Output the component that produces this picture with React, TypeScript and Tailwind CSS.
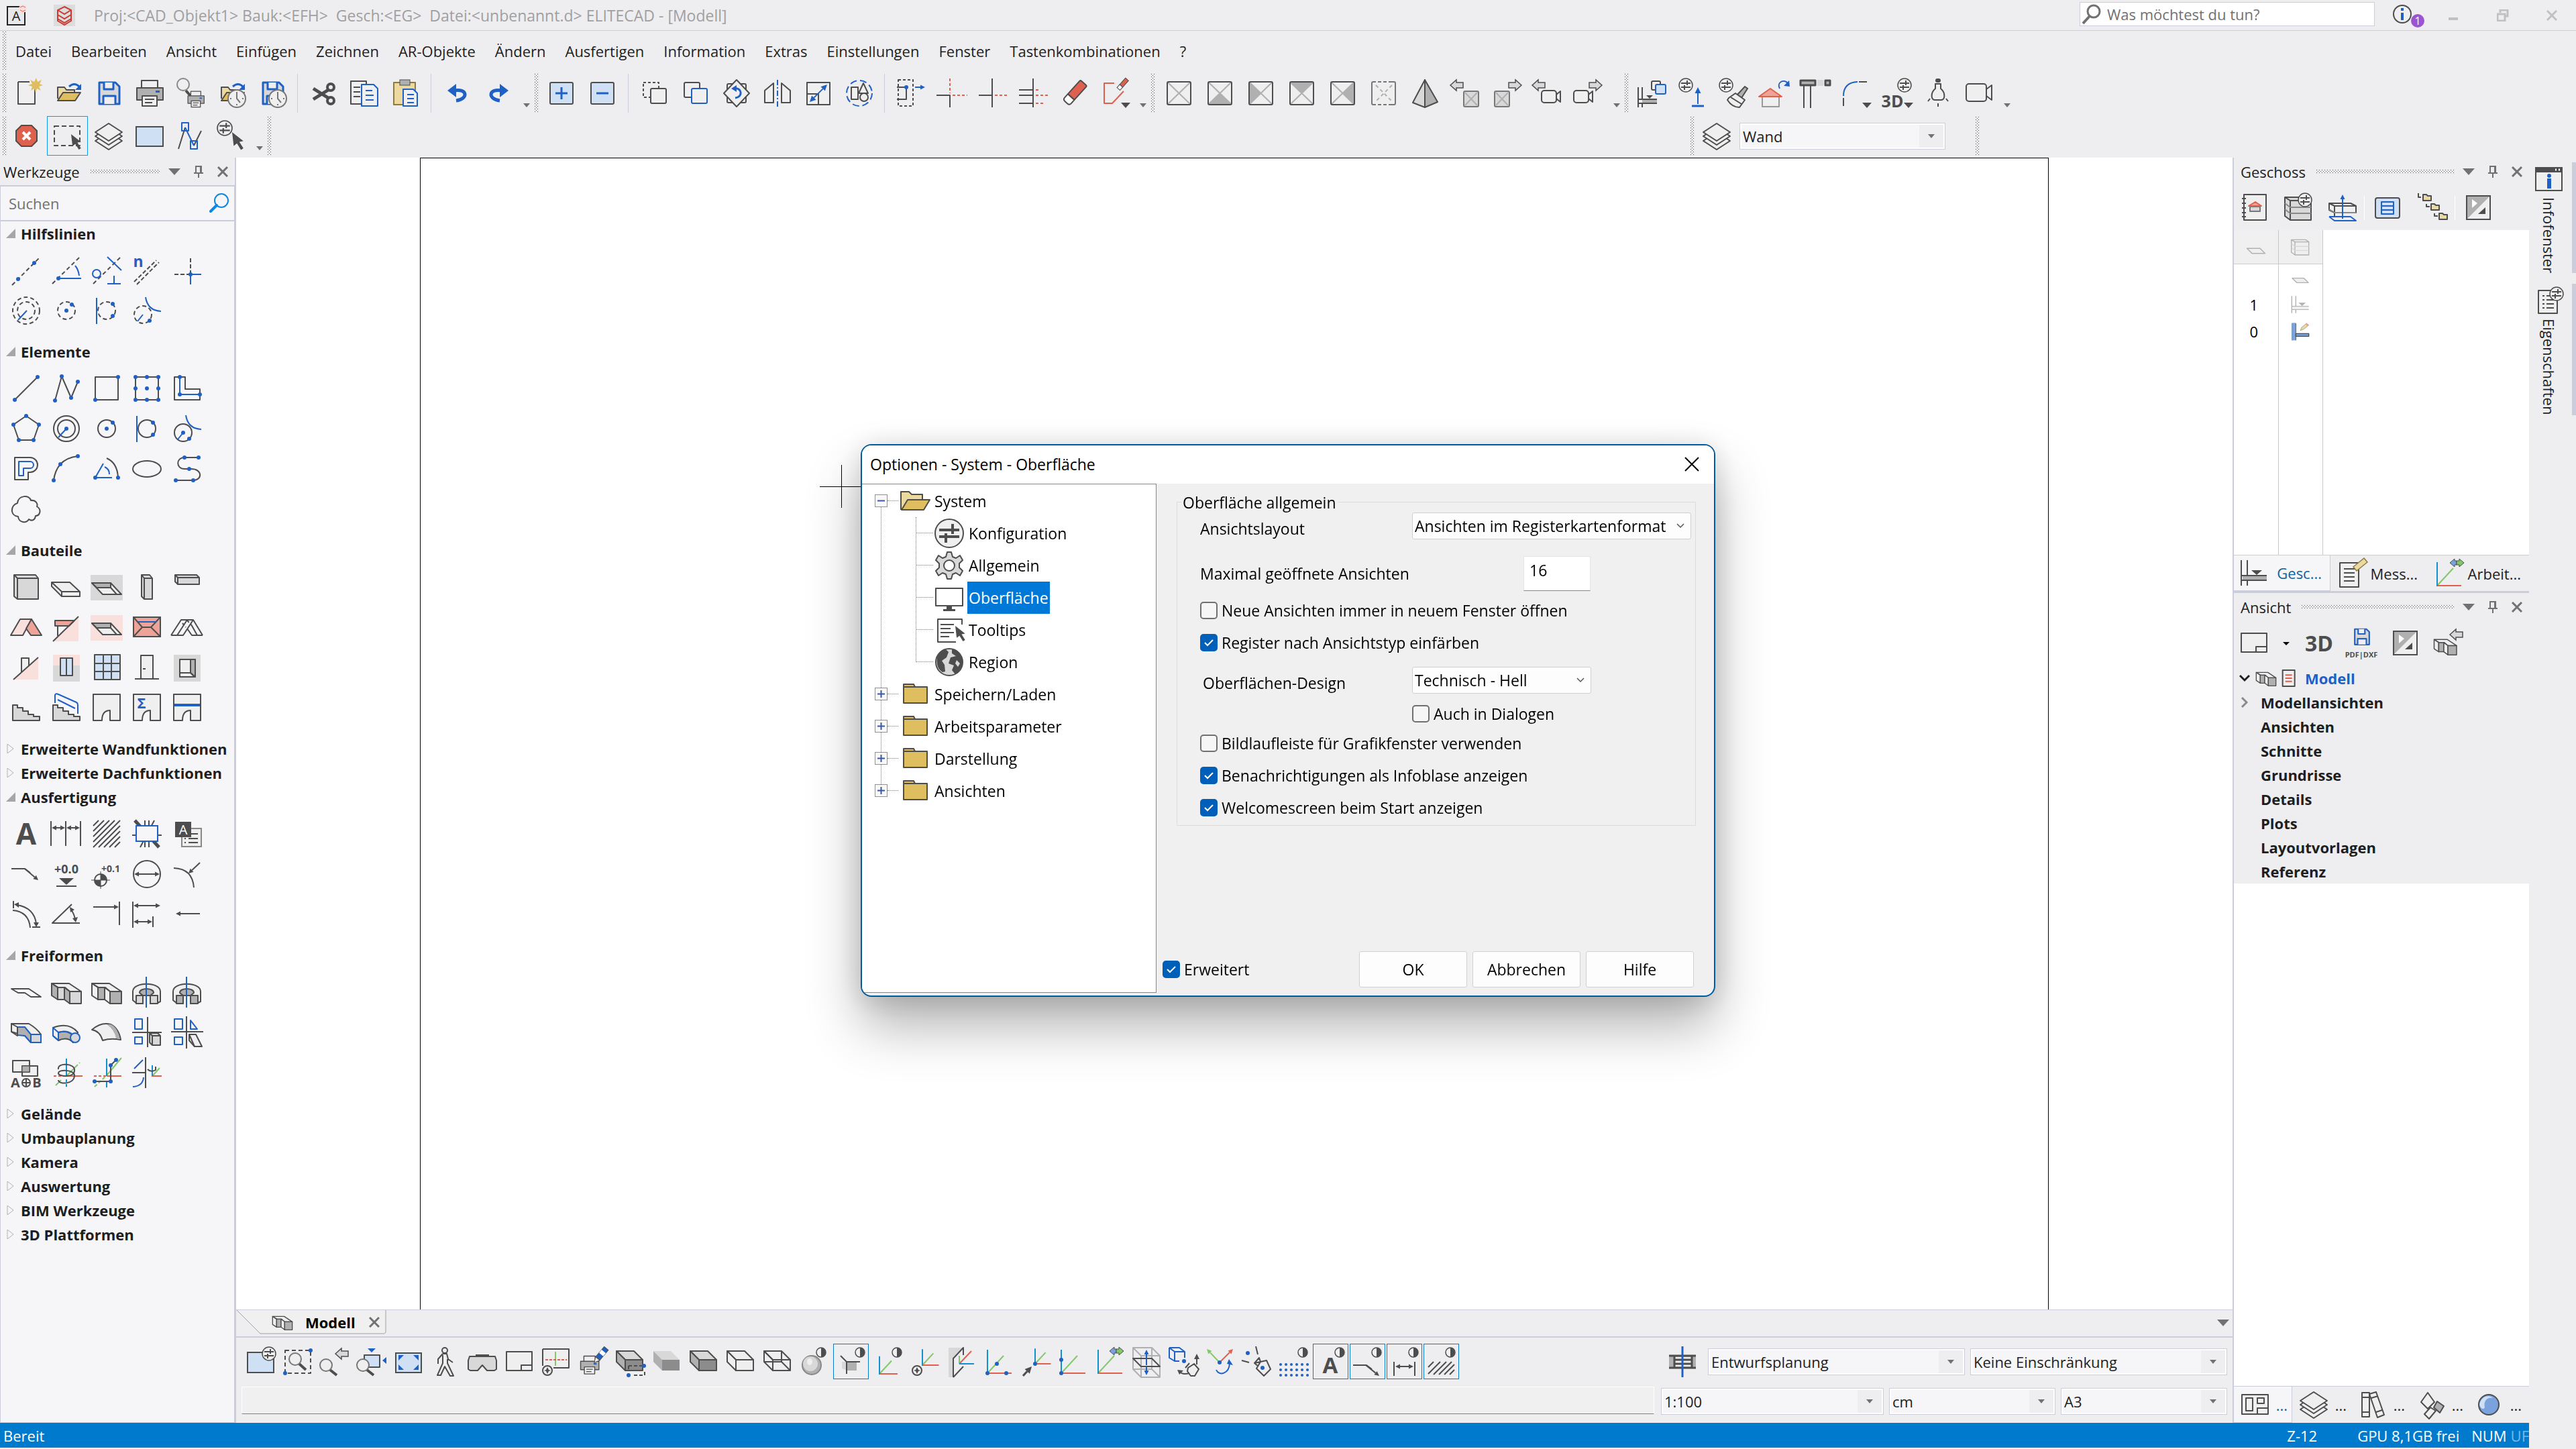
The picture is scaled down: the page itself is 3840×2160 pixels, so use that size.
import React from "react";

const K = "#4d4d4d";
const B = "#1f60c4";
const LB = "#d0e0f4";
const G1 = "#efefef";
const G2 = "#d8d8d8";
const G3 = "#b0b0b0";
const R = "#e0604f";
const R2 = "#eda398";
const PK = "#fae0dc";
const Y = "#dfbe5f";
const YL = "#ecd9a0";
const GR = "#80c868";
const CY = "#1090cc";

/* ---------- drawing primitives ---------- */

function P({ d, c = K, f = "none", w = 2, h }: { d: string; c?: string; f?: string; w?: number; h?: string }) {
  return <path d={d} stroke={c} fill={f} strokeWidth={w} strokeDasharray={h} strokeLinejoin="round" />;
}
function C({ x, y, r, c = K, f = "none", w = 2, h }: { x: number; y: number; r: number; c?: string; f?: string; w?: number; h?: string }) {
  return <circle cx={x} cy={y} r={r} stroke={c} fill={f} strokeWidth={w} strokeDasharray={h} />;
}
function Dots({ p, r = 3 }: { p: number[][]; r?: number }) {
  return (
    <>
      {p.map(([x, y], i) => (
        <circle key={i} cx={x} cy={y} r={r} fill={B} />
      ))}
    </>
  );
}
function Arrow({ a, c = K, both = false, w = 2, s = 7 }: { a: number[]; c?: string; both?: boolean; w?: number; s?: number }) {
  const [x1, y1, x2, y2] = a;
  const n = Math.hypot(x2 - x1, y2 - y1);
  const ux = (x2 - x1) / n;
  const uy = (y2 - y1) / n;
  const head = (x: number, y: number, k: number) =>
    `M${x} ${y}L${x - k * ux * s - uy * s * 0.5} ${y - k * uy * s + ux * s * 0.5}L${x - k * ux * s + uy * s * 0.5} ${y - k * uy * s - ux * s * 0.5}Z`;
  return (
    <>
      <path d={`M${x1 + (both ? ux * s : 0)} ${y1 + (both ? uy * s : 0)}L${x2 - ux * s} ${y2 - uy * s}`} stroke={c} strokeWidth={w} />
      <path d={head(x2, y2, 1)} fill={c} />
      {both && <path d={head(x1, y1, -1)} fill={c} />}
    </>
  );
}
function T({ x, y, s, c = K, w = 700, children }: { x: number; y: number; s: number; c?: string; w?: number; children: React.ReactNode }) {
  return (
    <text x={x} y={y} fontSize={s} fill={c} fontWeight={w} textAnchor="middle" fontFamily='"Open Sans", sans-serif'>
      {children}
    </text>
  );
}
function Badge({ x, y, r = 10 }: { x: number; y: number; r?: number }) {
  return (
    <g transform={`translate(${x} ${y}) scale(${r / 10})`}>
      <circle r="10" fill={G1} stroke={K} strokeWidth="1.5" />
      <path d="M-7 -3H7M-7 3H7M2 -7V0M-2 0V7" stroke={K} strokeWidth="2" />
    </g>
  );
}
function Half({ x = 37, y = 10 }: { x?: number; y?: number }) {
  return (
    <>
      <circle cx={x} cy={y} r="7" fill={G1} stroke={K} strokeWidth="1.5" />
      <path d={`M${x} ${y - 7}a7 7 0 0 1 0 14z`} fill={K} />
    </>
  );
}
function Mag({ x, y, hx, hy, r = 9 }: { x: number; y: number; hx: number; hy: number; r?: number }) {
  return (
    <>
      <path d={`M${x + 6} ${y + 7}L${hx} ${hy}`} stroke={K} strokeWidth="4" />
      <circle cx={x} cy={y} r={r} fill={G1} stroke="#777" strokeWidth="2" />
    </>
  );
}
const Clock = () => (
  <>
    <circle cx="32" cy="32" r="13" fill={G1} stroke="#777" strokeWidth="2" />
    <path d="M32 22V32L37 38M32 42v-2M22 32h2M42 32h-2" stroke="#777" strokeWidth="2" fill="none" />
  </>
);
const Folder = () => (
  <>
    <P d="M9 32V15H19L22 19H34V24" f={YL} />
    <P d="M9 35L17 23H43L35 35Z" f={Y} />
    <P d="M26 14Q34 7 41 14" c={B} w={3} />
    <path d="M44 10V19H35Z" fill={B} />
  </>
);
const Floppy = () => (
  <>
    <P d="M10 8H34L40 14V40H10Z" c={B} f={G2} w={3} />
    <P d="M17 8V18H31V8M16 40V28H34V40" c={B} f={G1} w={3} />
  </>
);
const Printer = () => (
  <>
    <P d="M12 16V5H36V16" f={G1} />
    <P d="M5 16H44V34H5Z" f={G3} />
    <P d="M13 28H35V43H13Z" f={G1} />
    <P d="M17 33H31M17 38H28" />
    <rect x="33" y="20" width="6" height="3" fill={B} />
  </>
);
const ArrowL = ({ x, y }: { x: number; y: number }) => (
  <g transform={`translate(${x} ${y})`}>
    <path d="M0 8L9 0V4H19V12H9V16Z" fill={G2} stroke={K} strokeWidth="1.5" />
  </g>
);
const ArrowR = ({ x, y }: { x: number; y: number }) => (
  <g transform={`translate(${x} ${y})`}>
    <path d="M19 8L10 0V4H0V12H10V16Z" fill={G2} stroke={K} strokeWidth="1.5" />
  </g>
);
const Tri = ({ x = 40, y = 38 }: { x?: number; y?: number }) => <path d={`M${x - 7} ${y}h14l-7 8z`} fill={K} />;
const XBox = ({ f }: { f?: string }) => (
  <>
    <rect x="6" y="7" width="35" height="34" rx="2" fill={G1} />
    {f && <path d={f} fill={G3} />}
    <P d="M7 8L40 40M40 8L7 40" c={G3} />
    <rect x="6" y="7" width="35" height="34" rx="2" fill="none" stroke={K} strokeWidth="2" />
  </>
);
const SmallX = ({ x }: { x: number }) => (
  <>
    <rect x={x} y="21" width="22" height="23" rx="2" fill={G2} stroke="#777" strokeWidth="2" />
    <P d={`M${x + 2} 23l18 19m0 -19l-18 19`} c={G3} />
  </>
);
const Cam = ({ x }: { x: number }) => (
  <>
    <rect x={x} y="20" width="22" height="18" rx="4" fill={G1} stroke={K} strokeWidth="2" />
    <P d={`M${x + 22} 26l6-5v16l-6-5`} />
  </>
);
const Layers = () => (
  <>
    <P d="M4 31L24 44L44 31L38 27H10Z" f={G1} />
    <P d="M4 24L24 37L44 24L38 20H10Z" f={G1} />
    <P d="M24 5L44 18L24 31L4 18Z" f={G1} />
  </>
);
const Cursor = ({ x, y, s = 1 }: { x: number; y: number; s?: number }) => (
  <path transform={`translate(${x} ${y}) scale(${s})`} d="M0 0L14 11L9 12L14 20L11 22L6 14L2 17Z" fill={K} />
);
const Slot = ({ bg }: { bg: string }) => (
  <>
    <rect y="6" width="48" height="38" fill={bg} />
    <P d="M2 18H30L46 35H18Z" f={G1} />
    <P d="M2 18H30V25H9Z" f={G3} />
    <P d="M30 25L39 35" />
  </>
);
const Stairs = () => <P d="M4 20H11V24H19V29H27V34H35V37H44V43H4Z" f={G2} />;
const Wall = () => <P d="M4 4H44V43H29V28Q17 28 17 43H4Z" f={G1} />;
const Block = ({ a, b, c, d }: { a: string; b: string; c: string; d: string }) => (
  <>
    <P d="M2 11H28L46 23H29L22 17H12Z" f={G1} />
    <P d="M2 11V29L11 35V17Z" f={a} />
    <P d="M11 17V35H21V17Z" f={b} />
    <P d="M21 17V35L29 41V23Z" f={c} />
    <P d="M29 23H46V41H29Z" f={d} />
  </>
);
const Ring = ({ f }: { f: string }) => (
  <>
    <P d="M3 23C3 8 44 8 44 23V38L38 41H29V29C36 20 12 20 18 29V41H9L3 36Z" f={G1} />
    <P d="M13 25C13 17 34 17 34 25L29 29H18Z" f={G3} />
    <P d="M8 29H18V41H8ZM29 29H40V41H29Z" f={f} />
    <P d="M23 1V47" c={B} />
  </>
);
const Cube = ({ top, side, front, e = K }: { top: string; side: string; front: string; e?: string }) => (
  <>
    <P d="M4 8H30L43 21H17Z" c={e} f={top} />
    <P d="M4 8V24L17 37V21Z" c={e} f={side} />
    <P d="M17 21H43V37H17Z" c={e} f={front} />
  </>
);
const Axes = ({ x, y, k = 1 }: { x: number; y: number; k?: number }) => (
  <>
    <P d={`M${x} ${y}L${x + 24 * k} ${y - 26 * k}`} c={GR} />
    <P d={`M${x} ${y}H${x + 36 * k}`} c={R} />
    <P d={`M${x} ${y + 1}V${y - 35 * k}`} c={CY} />
  </>
);
const Swap = () => (
  <>
    <path d="M24 8L31 2V5H34V11H31V14Z" fill="#7aa3de" stroke={K} />
    <path d="M45 8L38 2V5H34V11H38V14Z" fill={GR} stroke={K} />
  </>
);
const Scheme = () => (
  <>
    <rect x="6" y="6" width="35" height="35" fill={G1} />
    <path d="M6 6H41L6 41Z" fill={G3} />
    <path d="M14 11L22 17L14 24Z" fill="#fff" />
    <path d="M34 23V33H23Z" fill={K} />
    <rect x="6" y="6" width="35" height="35" fill="none" stroke={K} strokeWidth="2" />
  </>
);
const Sheet = () => <P d="M5 9H43V37H5ZM27 37V29H43" f={G1} />;
const Slab = ({ g = false }: { g?: boolean }) => (
  <>
    <P d="M5 5V43M14 5V27M14 35V43" c={g ? G3 : K} f={G1} />
    <P d="M6 28H43M6 35H43" c={g ? G3 : K} />
    <rect x="7" y="29" width="36" height="5" fill={g ? G1 : G3} />
    <path d="M20 20H36L28 27Z" fill={g ? G3 : K} />
  </>
);
const Storeys = ({ c = K, m = "#888", f = G2 }: { c?: string; m?: string; f?: string }) => (
  <>
    <P d="M4 8H36L43 13V42H12L4 36Z" c={c} f={f} />
    <P d="M4 8L12 13H43M12 13V42" c={c} />
    <P d="M4 17L12 23H43M4 26L12 32H43" c={m} />
  </>
);

const icons: Record<string, React.ReactNode> = {
  /* file toolbar */
  new: (
    <>
      <P d="M11 7H28M11 7V40H36V15" f={G1} />
      <path d="M38 1l2 6 6-3-3 6 5 2-6 2 3 6-6-3-2 6-2-6-5 3 2-6-6-2 6-2-3-6 6 3z" fill={Y} />
    </>
  ),
  open: <Folder />,
  save: <Floppy />,
  print: <Printer />,
  preview: (
    <>
      <P d="M17 20L26 30" w={4} />
      <C x={13} y={11} r={9} c="#888" f={G1} />
      <g transform="translate(17 18) scale(0.62)">
        <Printer />
      </g>
    </>
  ),
  recent: (
    <>
      <Folder />
      <Clock />
    </>
  ),
  autosave: (
    <>
      <Floppy />
      <Clock />
    </>
  ),
  cut: (
    <>
      <P d="M9 17L33 32M9 33L33 18" w={5} />
      <C x={35} y={15} r={5} w={4} />
      <C x={35} y={35} r={5} w={4} />
    </>
  ),
  copy: (
    <>
      <P d="M4 6H27V40H4Z" f={G1} />
      <P d="M8 15H18M8 22H18M8 29H18" w={2} />
      <P d="M20 11H38L44 17V43H20Z" c={B} f={G1} />
      <P d="M26 20H36M26 27H38M26 34H38" c={B} />
    </>
  ),
  paste: (
    <>
      <P d="M7 8H39V41H7Z" c="#8a7a4a" f={YL} />
      <rect x="16" y="4" width="15" height="8" fill={G3} stroke={K} />
      <P d="M21 18H36L42 24V43H21Z" c={B} f={G1} />
      <P d="M27 26H37M27 32H37M27 38H37" c={B} />
    </>
  ),
  undo: (
    <>
      <path d="M9 20L22 10V30Z" fill={B} />
      <P d="M18 20C40 16 40 33 22 35" c={B} w={5} />
    </>
  ),
  redo: (
    <>
      <path d="M39 20L26 10V30Z" fill={B} />
      <P d="M30 20C8 16 8 33 26 35" c={B} w={5} />
    </>
  ),
  plus: (
    <>
      <rect x="7" y="8" width="34" height="32" rx="2" fill={LB} stroke={K} strokeWidth="2" />
      <P d="M24 15V33M15 24H33" c={B} w={3} />
    </>
  ),
  minus: (
    <>
      <rect x="7" y="8" width="34" height="32" rx="2" fill={LB} stroke={K} strokeWidth="2" />
      <P d="M15 24H33" c={B} w={3} />
    </>
  ),
  move: (
    <>
      <P d="M7 8H30V30H7Z" h="4 3" />
      <rect x="18" y="17" width="23" height="22" rx="2" fill={G1} stroke={K} strokeWidth="2" />
    </>
  ),
  dup: (
    <>
      <rect x="7" y="8" width="23" height="22" rx="2" fill={G1} stroke={K} strokeWidth="2" />
      <rect x="18" y="17" width="23" height="22" rx="2" fill={G1} stroke={B} strokeWidth="2" />
    </>
  ),
  rotate: (
    <>
      <rect x="10" y="10" width="28" height="28" rx="2" fill={G1} stroke={K} strokeWidth="2" />
      <P d="M24 4L43 24L24 44L5 24Z" f={G1} />
      <P d="M21 17C32 15 34 30 22 31" c={B} w={3} />
      <path d="M16 17L24 12V22Z" fill={B} />
    </>
  ),
  mirror: (
    <>
      <P d="M5 20L18 9V38H5ZM43 20L30 9V38H43Z" f={G1} />
      <P d="M24 4V44" c={B} h="8 3 2 3" />
    </>
  ),
  scale: (
    <>
      <P d="M7 8H41V41H7ZM7 25H24V41" f={G1} />
      <Arrow a={[11, 37, 37, 11]} c={B} both s={9} />
    </>
  ),
  modify: (
    <>
      <C x={24} y={24} r={19} c={B} h="10 5" />
      <P d="M12 15H22V33H12Z" f={G1} />
      <P d="M30 9L37 24H23Z" f={G1} />
      <C x={31} y={30} r={6} f={G1} />
    </>
  ),
  stretch: (
    <>
      <P d="M6 4H28V43H6Z" h="4 3" />
      <P d="M4 15H18V33H4" />
      <Dots p={[[18, 15]]} />
      <Arrow a={[31, 15, 46, 15]} c={B} />
    </>
  ),
  trim: (
    <>
      <P d="M2 27H22V45" />
      <P d="M22 2V24M26 27H48" c={R} h="4 3" />
    </>
  ),
  extend: (
    <>
      <P d="M24 2V45M4 27H24" />
      <P d="M28 27H48" c={R} h="4 3" />
    </>
  ),
  multi: (
    <>
      <P d="M24 2V45M3 19H24M3 27H24M3 39H24" />
      <P d="M28 19H34M28 27H48M28 39H40" c={R} h="4 3" />
    </>
  ),
  eraser: (
    <g transform="rotate(42 24 24)">
      <rect x="18" y="3" width="13" height="28" rx="2" fill={R} stroke={K} strokeWidth="2" />
      <path d="M18 31H31V38Q31 42 27 42H22Q18 42 18 38Z" fill="#fff" stroke={K} strokeWidth="2" />
    </g>
  ),
  redline: (
    <>
      <P d="M23 9H8V39H20L37 21" c={R} />
      <g transform="rotate(42 36 10)">
        <rect x="33" y="1" width="6" height="13" fill={R} stroke={K} />
        <rect x="33" y="14" width="6" height="6" fill="#fff" stroke={K} />
      </g>
      <Tri />
    </>
  ),
  box0: <XBox />,
  box1: <XBox f="M7 40L24 24L40 40Z" />,
  box2: <XBox f="M7 8L24 24L7 40Z" />,
  box3: <XBox f="M7 8L24 24L40 8Z" />,
  box4: <XBox f="M40 8L24 24L40 40Z" />,
  box5: (
    <>
      <rect x="6" y="7" width="35" height="34" rx="2" fill={G1} stroke="#777" strokeWidth="2" />
      <path d="M12 7h3M20 7h3M28 7h3M12 41h3M20 41h3M28 41h3" stroke={G1} strokeWidth="2" />
      <P d="M12 12L36 36M36 12L12 36" c={G3} h="5 4" />
    </>
  ),
  pyramid: (
    <>
      <P d="M24 4L6 38L24 45Z" f={G2} />
      <P d="M24 4L43 37L24 45Z" f={G3} />
    </>
  ),
  prevbox: (
    <>
      <ArrowL x={1} y={4} />
      <SmallX x={21} />
    </>
  ),
  nextbox: (
    <>
      <ArrowR x={27} y={4} />
      <SmallX x={6} />
    </>
  ),
  prevcam: (
    <>
      <ArrowL x={1} y={4} />
      <Cam x={15} />
    </>
  ),
  nextcam: (
    <>
      <ArrowR x={25} y={4} />
      <Cam x={2} />
    </>
  ),
  level: (
    <>
      <P d="M4 15V45M10 15V33M10 39V45M4 33H32M4 39H32" />
      <rect x="10" y="34" width="22" height="4" fill={G3} />
      <path d="M16 27H26L21 32Z" fill={K} />
      <rect x="24" y="6" width="13" height="13" rx="2" fill={G1} stroke={K} strokeWidth="2" />
      <rect x="30" y="11" width="15" height="14" rx="2" fill={LB} stroke={B} strokeWidth="2" />
    </>
  ),
  height: (
    <>
      <Badge x={14} y={12} />
      <Arrow a={[32, 40, 32, 15]} c={B} s={9} />
      <P d="M23 43H41" c={B} w={3} />
    </>
  ),
  brush: (
    <>
      <path d="M29 27L41 14L45 17L36 31Z" fill={G3} stroke={K} strokeWidth="2" />
      <P d="M17 31L27 24L41 34L33 45Q22 45 15 34Z" f={G1} />
      <P d="M20 30L36 40" />
      <Badge x={13} y={12} />
    </>
  ),
  house: (
    <>
      <P d="M6 29H31V44H6Z" f={G1} c="#999" />
      <P d="M1 29L18 17L35 29Z" f={R2} c={R} />
      <P d="M32 17C27 8 38 2 44 9" c={B} />
      <path d="M47 14L38 13L46 5Z" fill={B} />
    </>
  ),
  column: (
    <>
      <P d="M7 12V46M17 12V46" />
      <P d="M2 5H24V12H2ZM39 5H46V12H39Z" f={G3} w={3} />
      <rect x="27" y="4" width="9" height="9" fill={G2} />
    </>
  ),
  fillet: (
    <>
      <P d="M5 28Q5 8 26 7" c={B} />
      <P d="M28 7H40M5 31V43" />
      <Tri />
    </>
  ),
  three: (
    <>
      <T x={17} y={45} s={25}>3D</T>
      <Badge x={35} y={12} />
      <Tri x={41} />
    </>
  ),
  lamp: (
    <>
      <rect x="20" y="2" width="8" height="6" rx="3" fill={K} />
      <P d="M20 10H28V17C36 24 34 34 29 34H19C14 34 12 24 20 17Z" f={G1} />
      <P d="M12 32L9 36M36 32L39 36M24 39V44" />
    </>
  ),
  camera: (
    <>
      <rect x="5" y="10" width="30" height="26" rx="4" fill={G1} stroke={K} strokeWidth="2" />
      <P d="M35 18L43 12V34L35 28" />
    </>
  ),
  cancel: (
    <>
      <path d="M16 8H31L39 16V31L31 39H16L8 31V16Z" fill={R} stroke={K} strokeWidth="2" />
      <P d="M18 18L29 29M29 18L18 29" c="#fff" w={4} />
    </>
  ),
  select: (
    <>
      <P d="M4 9H42V38H4Z" h="7 4" />
      <Cursor x={29} y={21} s={1.05} />
    </>
  ),
  layers: <Layers />,
  rect: <rect x="4" y="10" width="40" height="29" fill={LB} stroke={K} strokeWidth="2" />,
  nodes: (
    <>
      <P d="M6 43L16 11M29 38L40 16" />
      <P d="M16 11L29 38" c={B} />
      <P d="M11 4H21V16H11ZM24 31H34V43H24Z" c={B} />
    </>
  ),
  pick: (
    <>
      <Badge x={14} y={12} r={11} />
      <Cursor x={25} y={18} s={1.2} />
    </>
  ),
  /* construction lines */
  h1: (
    <>
      <P d="M3 46L45 4" h="6 4" />
      <Dots p={[[12, 37], [36, 13]]} />
    </>
  ),
  h2: (
    <>
      <P d="M3 44L43 5" h="6 4" />
      <P d="M12 36H46M37 17Q42 23 43 32" c={B} />
      <Dots p={[[12, 36]]} />
    </>
  ),
  h3: (
    <>
      <P d="M4 44L44 5" h="6 4" />
      <C x={9} y={29} r={6} c={B} />
      <P d="M25 4L46 24M25 44H45M35 32V44" c={B} />
    </>
  ),
  h4: (
    <>
      <P d="M5 41L38 9M9 45L42 12" h="6 3" />
      <T x={11} y={19} s={23} c={B}>n</T>
    </>
  ),
  h5: (
    <>
      <P d="M29 30V4M29 30H3" h="6 3" />
      <P d="M29 45V30H45" c={B} />
      <Dots p={[[29, 30]]} />
    </>
  ),
  h6: (
    <>
      <C x={24} y={24} r={20} h="6 4" />
      <C x={24} y={24} r={13} h="6 4" />
      <P d="M25 24L12 38" c={B} />
    </>
  ),
  h7: (
    <>
      <C x={24} y={24} r={13} h="6 4" />
      <Dots p={[[24, 24], [32, 15]]} />
    </>
  ),
  h8: (
    <>
      <C x={24} y={24} r={13} h="6 4" />
      <P d="M9 5V44" c={B} />
      <Dots p={[[33, 14], [33, 32]]} />
    </>
  ),
  h9: (
    <>
      <C x={18} y={30} r={13} h="6 4" />
      <P d="M18 30L10 40M22 4Q25 24 45 25" c={B} />
      <Dots p={[[28, 39]]} />
    </>
  ),
  e1: (
    <>
      <P d="M7 41L41 7" />
      <Dots p={[[7, 41], [41, 7]]} />
    </>
  ),
  e2: (
    <>
      <P d="M7 42L17 6L31 38L41 14" />
      <Dots p={[[7, 42], [17, 6], [31, 38], [41, 14]]} />
    </>
  ),
  e3: (
    <>
      <P d="M7 7H41V41H7Z" />
      <Dots p={[[7, 41], [41, 7]]} />
    </>
  ),
  e4: (
    <>
      <P d="M7 7H41V41H7Z" />
      <Dots p={[[7, 7], [24, 7], [41, 7], [7, 24], [24, 24], [41, 24], [7, 41], [24, 41], [41, 41]]} />
    </>
  ),
  e5: (
    <>
      <P d="M5 7H21V25H43V41H5Z" />
      <P d="M13 7V33H43" c={B} />
      <Dots p={[[13, 7], [13, 33], [43, 33]]} />
    </>
  ),
  e6: (
    <>
      <P d="M24 5L43 18L35 41H13L5 18Z" />
      <Dots p={[[24, 5], [43, 18], [35, 41], [13, 41], [5, 18]]} />
    </>
  ),
  e7: (
    <>
      <C x={24} y={24} r={19} />
      <C x={24} y={24} r={13} />
      <P d="M24 24L12 37" c={B} />
      <Dots p={[[24, 24]]} />
    </>
  ),
  e8: (
    <>
      <C x={24} y={24} r={13} />
      <Dots p={[[24, 24], [33, 15]]} />
    </>
  ),
  e9: (
    <>
      <C x={24} y={24} r={13} />
      <P d="M9 5V44" c={B} />
      <Dots p={[[33, 15], [33, 33]]} />
    </>
  ),
  e10: (
    <>
      <C x={18} y={30} r={13} />
      <P d="M18 30L10 40M22 4Q25 24 45 25" c={B} />
      <Dots p={[[18, 30], [27, 39]]} />
    </>
  ),
  e11: (
    <>
      <P d="M7 7H30A11 11 0 0 1 30 29H27V40H7Z" />
      <P d="M13 13H30A5 5 0 0 1 30 23H20V34H13Z" c={B} />
    </>
  ),
  e12: (
    <>
      <P d="M5 41Q7 26 15 17Q24 7 41 5" />
      <Dots p={[[5, 41], [15, 17], [41, 5]]} />
    </>
  ),
  e13: (
    <>
      <P d="M24 8Q40 15 41 37" />
      <P d="M19 16L7 37H32M21 21Q28 24 28 32" c={B} />
      <Dots p={[[7, 37], [41, 37]]} />
    </>
  ),
  e14: <ellipse cx="24" cy="24" rx="21" ry="12" stroke={K} strokeWidth="2" />,
  e15: (
    <>
      <P d="M41 7H20C7 7 7 24 20 24H30C47 24 47 41 33 41H7" />
      <Dots p={[[41, 7], [20, 7], [27, 24], [33, 41], [7, 41]]} />
    </>
  ),
  e16: <P d="M11 15C12 3 29 2 31 11C38 10 42 16 40 20C48 25 44 34 38 34C37 41 32 42 28 39C24 46 13 44 12 35C0 34 0 18 11 15Z" />,
  /* building parts */
  b1: (
    <>
      <P d="M6 6H38L42 11V42H11L6 38Z" f={G2} />
      <P d="M6 6L11 11H42M11 11V42" />
    </>
  ),
  b2: (
    <>
      <P d="M2 17V23L17 38H44V31L29 17Z" f={G1} />
      <P d="M2 17L17 31H44M17 31V38" />
    </>
  ),
  b3: <Slot bg={G2} />,
  b4: (
    <>
      <P d="M16 6H28L32 11V42H20L16 38Z" f={G2} />
      <P d="M16 6L20 11H32M20 11V42" />
    </>
  ),
  b5: (
    <>
      <P d="M6 6H38L42 10V20H10L6 16Z" f={G2} />
      <P d="M6 6L10 10H42M10 10V20" />
    </>
  ),
  b6: (
    <>
      <P d="M1 36L15 12H32L19 36Z" f={PK} />
      <P d="M32 12L47 36H31L24 26Z" f={R2} />
    </>
  ),
  b7: (
    <>
      <path d="M42 8V45H5Z" fill={PK} />
      <P d="M7 14H36L28 22H7Z" f={R2} />
      <P d="M11 22V37M4 45L42 8" />
    </>
  ),
  b8: <Slot bg={PK} />,
  b9: (
    <>
      <rect x="4" y="9" width="40" height="29" fill={R2} stroke={K} strokeWidth="2" />
      <P d="M4 9L17 24H30L44 9M4 38L17 24M44 38L30 24" />
      <P d="M10 16H38" c={B} />
    </>
  ),
  b10: (
    <>
      <P d="M0 36L15 13H33L47 36M0 36H18L33 13M9 36L24 13M24 26L31 36H47M30 20L39 36" />
      <P d="M17 18L22 24M24 14L30 20" h="4 3" />
    </>
  ),
  b11: (
    <>
      <path d="M42 9V42H5Z" fill={PK} />
      <P d="M17 31V10H28V21" f={G1} />
      <P d="M5 42L42 9" />
    </>
  ),
  b12: (
    <>
      <rect x="4" y="5" width="40" height="16" fill={PK} />
      <rect x="4" y="21" width="40" height="24" fill={G2} />
      <P d="M15 10H33V36H15ZM24 10V36" f={LB} />
    </>
  ),
  b13: <P d="M6 5H44V42H6ZM19 5V42M31 5V42M6 18H44M6 30H44" f={LB} />,
  b14: (
    <>
      <P d="M15 41V6H33V41" f={G1} />
      <P d="M6 41H42M18 26H22" />
    </>
  ),
  b15: (
    <>
      <rect x="4" y="5" width="40" height="40" fill={G2} />
      <P d="M13 12H36V38H13Z" f={G1} />
      <P d="M29 12H36V38L29 32Z" f={G3} />
      <P d="M13 32H29L35 38" />
    </>
  ),
  b16: <Stairs />,
  b17: (
    <>
      <Stairs />
      <P d="M7 17V5Q8 2 12 4L39 16Q41 17 41 20V33M11 12L37 25" c={B} />
    </>
  ),
  b18: <Wall />,
  b19: (
    <>
      <Wall />
      <T x={16} y={25} s={22} c={B}>Σ</T>
    </>
  ),
  b20: (
    <>
      <Wall />
      <P d="M5 20H43" c={B} w={4} />
    </>
  ),
  /* drafting */
  a1: <T x={24} y={40} s={44}>A</T>,
  a2: (
    <>
      <P d="M1 5V42M23 5V42M45 5V42" />
      <Arrow a={[2, 15, 22, 15]} both />
      <Arrow a={[24, 15, 44, 15]} both />
    </>
  ),
  a3: <P d="M4 12L12 4M4 20L20 4M4 28L28 4M4 36L36 4M4 44L44 4M12 44L44 12M20 44L44 20M28 44L44 28M36 44L44 36" />,
  a4: (
    <>
      <P d="M6 4L42 44" w={5} />
      <P d="M2 26H46M21 4V44M27 4V44M35 4L14 44" />
      <rect x="8" y="12" width="32" height="23" fill="#f6f6f9" stroke={B} strokeWidth="2" />
    </>
  ),
  a5: (
    <>
      <rect x="16" y="16" width="29" height="27" fill={G1} stroke="#888" strokeWidth="2" />
      <P d="M20 37H22M26 37H40M20 31H22M26 31H40M30 24H40" />
      <rect x="6" y="6" width="24" height="23" fill={K} />
      <T x={18} y={25} s={20} c="#fff" w={400}>A</T>
    </>
  ),
  a6: (
    <>
      <P d="M2 16H22L30 22" />
      <Arrow a={[22, 16, 42, 33]} />
    </>
  ),
  a7: (
    <>
      <T x={24} y={23} s={18}>+0.0</T>
      <path d="M13 30H35L24 40Z" fill={K} />
      <P d="M9 42H39" />
    </>
  ),
  a8: (
    <>
      <T x={30} y={21} s={14}>+0.1</T>
      <C x={15} y={33} r={9} />
      <path d="M15 33V24A9 9 0 0 1 24 33ZM15 33V42A9 9 0 0 1 6 33Z" fill={K} />
      <P d="M1 33H29M15 20V46" w={1} />
    </>
  ),
  a9: (
    <>
      <C x={24} y={24} r={20} />
      <Arrow a={[5, 24, 43, 24]} both />
    </>
  ),
  a10: (
    <>
      <P d="M4 15Q32 16 34 44" />
      <Arrow a={[43, 7, 26, 23]} />
    </>
  ),
  a11: (
    <>
      <P d="M10 10Q36 14 39 38M4 18Q28 20 30 44M5 4V15M33 43H45" />
      <path d="M6 9L13 6V14ZM39 43L35 36H43Z" fill={K} />
    </>
  ),
  a12: (
    <>
      <P d="M32 9L3 37H44M31 17Q36 24 37 32" />
      <path d="M29 13L36 17L30 21ZM38 36L33 30L41 28Z" fill={K} />
    </>
  ),
  a13: (
    <>
      <Arrow a={[4, 13, 42, 13]} />
      <P d="M43 5V40" />
    </>
  ),
  a14: (
    <>
      <P d="M3 5V44M33 27V43" />
      <Arrow a={[4, 11, 44, 11]} both />
      <Arrow a={[4, 35, 32, 35]} both />
    </>
  ),
  a15: <Arrow a={[43, 23, 7, 23]} />,
  /* free forms */
  f1: <P d="M2 19H28L46 31H31L22 25H12Z" />,
  f2: <Block a={G3} b={G2} c={G3} d={G2} />,
  f3: <Block a={G1} b={G3} c={G1} d={G3} />,
  f4: <Ring f={G2} />,
  f5: <Ring f={G3} />,
  f6: (
    <>
      <P d="M2 11H28Q40 18 46 27V39H31L22 29L2 23Z" f={G1} />
      <P d="M11 16H22L31 27V39L22 29L11 28Z" c={B} f={G3} />
      <P d="M2 11L11 16V29L2 23Z" />
      <P d="M31 27H46V39H31Z" c={B} f={G2} />
    </>
  ),
  f7: (
    <>
      <P d="M4 17Q28 8 41 24L34 39Q24 28 12 36L4 29Z" f={G1} />
      <P d="M12 24Q26 20 34 29V38Q24 30 12 36Z" f={G3} />
      <P d="M4 17L12 24V36L4 29ZM12 24Q24 20 32 26" c={B} />
      <C x={37} y={32} r={7} c={B} f={G2} />
    </>
  ),
  f8: (
    <>
      <P d="M2 20Q16 8 30 12Q42 18 45 35Q30 32 18 36Q14 22 2 20Z" f={G1} />
      <path d="M24 12Q36 20 38 33L44 34Q40 16 30 12Z" fill={G3} />
    </>
  ),
  f9: (
    <>
      <P d="M25 1V46M2 24H46" />
      <P d="M6 4H17V19H6ZM6 31H17V41H6Z" c={B} />
      <P d="M28 25H40L44 29V43H32L28 39Z" f={G2} />
      <P d="M28 25L32 29H44M32 29V43" />
    </>
  ),
  f10: (
    <>
      <P d="M23 0V48M0 23H48" />
      <P d="M5 4H17V19H5ZM5 31H17V42H5ZM29 6V19H39Z" c={B} />
      <P d="M27 27H37L46 45H35L27 36Z" f={G1} />
      <P d="M27 27L35 45" />
    </>
  ),
  f11: (
    <>
      <P d="M4 6H29V23H4ZM18 14H41V29H18Z" f={G1} />
      <rect x="18" y="14" width="11" height="9" fill={G3} stroke={K} />
      <T x={8} y={46} s={20}>A</T>
      <T x={40} y={46} s={20}>B</T>
      <C x={24} y={39} r={6} />
      <P d="M18 39H30M24 33V45" />
    </>
  ),
  f12: (
    <>
      <P d="M24 29L44 9M16 35L8 43" c={GR} h="24 3" />
      <P d="M24 29H48" c={R} />
      <P d="M5 29H24" c={R} h="4 3" />
      <P d="M24 29V3" c={CY} />
      <P d="M24 34V46" c={CY} h="4 3" />
      <P d="M12 19C10 8 38 10 36 21C36 32 12 30 12 25C12 18 36 20 36 28C36 42 12 42 12 35" />
    </>
  ),
  f13: (
    <>
      <P d="M24 28L46 2" c={GR} />
      <P d="M6 45L24 28" c={GR} h="5 3" />
      <P d="M24 29H46" c={R} />
      <P d="M5 29H24" c={R} h="4 3" />
      <P d="M24 29V3M24 36V46" c={CY} h="26 3" />
      <P d="M6 37H30V13L38 5" />
      <Dots p={[[6, 37], [30, 37], [30, 13], [38, 5]]} />
    </>
  ),
  f14: (
    <>
      <P d="M22 1V47M2 24H22" />
      <P d="M5 18L18 5M3 45Q18 44 19 31" c={B} />
      <P d="M32 29L43 17" c={GR} />
      <P d="M31 29H46" c={R} />
      <P d="M32 29V13" c={CY} />
      <P d="M25 19Q30 24 37 20V15" />
    </>
  ),
  /* view toolbar */
  v1: (
    <>
      <rect x="4" y="10" width="39" height="30" fill={LB} stroke={K} strokeWidth="2" />
      <Badge x={36} y={12} />
    </>
  ),
  v2: (
    <>
      <P d="M5 7H43V41H5Z" h="6 4" />
      <Mag x={20} y={20} hx={36} hy={36} />
      <Dots p={[[43, 7], [5, 41]]} />
    </>
  ),
  v3: (
    <>
      <Mag x={11} y={29} hx={27} hy={44} />
      <ArrowL x={25} y={4} />
    </>
  ),
  v4: (
    <>
      <P d="M13 14H36V32H13Z" f={LB} />
      <path d="M18 4H30L24 10ZM46 17V27L40 22Z" fill={B} />
      <Mag x={11} y={29} hx={27} hy={44} />
    </>
  ),
  v5: (
    <>
      <rect x="5" y="11" width="38" height="29" fill={LB} stroke={K} strokeWidth="2" />
      <path d="M9 14H17L9 22ZM39 14V22L31 14ZM9 36V28L17 36ZM39 36H31L39 28Z" fill={B} />
    </>
  ),
  v6: (
    <>
      <C x={23} y={7} r={4} />
      <P d="M20 12H26L28 20L35 25M20 12L13 20V27M20 14V26L12 44H17L23 31L31 45H36L27 26V20" f={G1} />
    </>
  ),
  v7: (
    <>
      <rect x="14" y="13" width="20" height="5" fill={K} />
      <P d="M5 16H43L45 22V35L42 37H31L24 29L17 37H6L3 35V22Z" f={G2} w={2} />
    </>
  ),
  v8: <Sheet />,
  v9: (
    <>
      <P d="M4 5H43V33H20M4 5V30" f={G1} />
      <P d="M23 9V30" c={GR} />
      <P d="M8 21H40" c={R} h="4 2" />
      <C x={11} y={37} r={7} f={G1} />
      <path d="M11 32L13 36L16 37L13 38L11 42L9 38L6 37L9 36Z" fill={K} />
    </>
  ),
  v10: (
    <>
      <g transform="translate(2 12) scale(0.7)">
        <Printer />
      </g>
      <g transform="rotate(40 34 14)">
        <rect x="31" y="0" width="8" height="20" fill={B} stroke={K} />
        <rect x="31" y="6" width="8" height="6" fill="#fff" />
        <path d="M31 20H39L35 28Z" fill={G1} stroke={K} />
      </g>
    </>
  ),
  v11: (
    <>
      <Cube top={G2} side={G3} front="#8c8c8c" />
      <P d="M22 30H42M22 30V38M30 44H46V38" h="5 3" />
      <Dots p={[[45, 30], [22, 44]]} />
    </>
  ),
  v12: <Cube top={G2} side={G3} front="#8c8c8c" e="none" />,
  v13: <Cube top={G2} side={G3} front="#8c8c8c" />,
  v14: <Cube top={G1} side={G1} front={G1} />,
  v15: (
    <>
      <Cube top="none" side="none" front="none" />
      <P d="M30 8V24H4M30 24L43 37" />
    </>
  ),
  v16: (
    <>
      <C x={20} y={29} r={14} c="#888" f={G3} />
      <circle cx="18" cy="27" r="11" fill={G2} />
      <ellipse cx="17" cy="24" rx="4" ry="5" fill={G1} />
      <Half x={34} />
    </>
  ),
  v17: (
    <>
      <path d="M18 24H32V37H18Z" fill={G3} />
      <path d="M10 24H18V37L10 34Z" fill={G2} />
      <P d="M8 15L17 24H37M17 24V42" />
      <Half />
    </>
  ),
  w1: (
    <>
      <Axes x={11} y={42} k={0.75} />
      <Half />
    </>
  ),
  w2: (
    <>
      <Axes x={20} y={29} k={0.68} />
      <C x={12} y={37} r={7} f={G1} />
      <path d="M12 32L14 36L17 37L14 38L12 42L10 38L7 37L10 36Z" fill={K} />
    </>
  ),
  w3: (
    <>
      <path d="M4 3H26L11 20V47H4Z" fill={G2} />
      <P d="M11 47V19L26 3V14M11 47L26 31" />
      <P d="M20 27L38 8" c={R} />
      <P d="M20 27V15" c={GR} />
      <P d="M20 27H42" c={CY} />
    </>
  ),
  w4: (
    <>
      <Axes x={7} y={41} />
      <Dots p={[[7, 41], [21, 27], [35, 41]]} />
    </>
  ),
  w5: (
    <>
      <Axes x={23} y={27} k={0.65} />
      <Dots p={[[23, 27]]} />
      <Arrow a={[5, 45, 18, 31]} s={10} w={3} />
    </>
  ),
  w6: (
    <>
      <Axes x={7} y={41} />
      <Dots p={[[7, 41], [7, 21]]} />
    </>
  ),
  w7: (
    <>
      <Axes x={7} y={41} />
      <Swap />
    </>
  ),
  w8: (
    <>
      <P d="M4 3H32L44 15V47H16L4 35ZM4 3L16 15H44M16 15V47M32 3V35L44 47M4 35H32" c={G3} />
      <P d="M4 19H32L44 31H16Z" />
      <Arrow a={[24, 29, 24, 6]} c={B} />
      <Arrow a={[24, 31, 24, 44]} c={B} />
    </>
  ),
  w9: (
    <>
      <P d="M3 3H18L26 9V18M3 3V18L11 23H18M3 3L11 9H26M11 9V23" c={B} />
      <Dots p={[[25, 23]]} />
      <P d="M31 33L40 27L47 35L41 45H35L30 38ZM33 26L27 33" f={G1} />
      <P d="M44 28V16M33 41Q22 44 18 38" />
      <path d="M44 12L48 20H40ZM15 36L24 37L18 43Z" fill={K} />
    </>
  ),
  w10: (
    <>
      <Arrow a={[23, 25, 4, 5]} c={GR} />
      <Arrow a={[23, 25, 43, 5]} c={R} />
      <Dots p={[[23, 25]]} />
      <P d="M18 36C22 46 38 42 38 25" c={B} />
      <path d="M37 20L43 29L34 27Z" fill={B} />
    </>
  ),
  w11: (
    <>
      <P d="M22 1L25 13M1 22L12 25" />
      <P d="M20 26L27 18L29 24L20 26L26 31M29 24L38 22L44 35L34 45L23 34Z" />
      <Dots p={[[10, 11], [32, 33]]} />
    </>
  ),
  w12: (
    <>
      <Dots
        p={[0, 1, 2].flatMap((j) => [0, 1, 2, 3, 4, 5].map((i) => [4 + i * 8, 28 + j * 8]))}
        r={2}
      />
      <Half />
    </>
  ),
  w13: (
    <>
      <T x={23} y={41} s={33}>A</T>
      <Half />
    </>
  ),
  w14: (
    <>
      <P d="M2 29H22L30 35" />
      <Arrow a={[21, 29, 41, 45]} />
      <Half />
    </>
  ),
  w15: (
    <>
      <P d="M8 24V45M39 24V45" />
      <Arrow a={[10, 31, 37, 31]} both />
      <Half />
    </>
  ),
  w16: (
    <>
      <P d="M4 32L12 24M4 42L22 24M12 43L31 24M20 43L39 24M28 43L43 28M36 43L43 36" />
      <Half />
    </>
  ),
  section: (
    <>
      <path d="M4 15H44V33H4Z" fill={G3} />
      <path d="M12 17H38V31H12Z" fill={G1} />
      <P d="M4 15H44M4 33H44M12 15V33M38 15V33M12 21H38M12 27H38" w={3} />
      <P d="M24 1V47" c={B} w={3} />
    </>
  ),
  /* storey panel */
  s1: (
    <>
      <P d="M8 4H41V42H8Z" f={G1} />
      <P d="M5 10H11M5 17H11M5 24H11M5 31H11M5 37H11" />
      <P d="M17 22H32V29H17Z" f={G2} c="#777" />
      <P d="M15 21L25 15L34 21Z" f={R2} c={R} />
    </>
  ),
  s2: (
    <>
      <Storeys />
      <Badge x={34} y={12} />
    </>
  ),
  s3: (
    <>
      <P d="M4 17H36L44 21V31H12L4 27ZM4 17L12 21H44M12 21V36" f={G1} />
      <P d="M4 26L12 31H44" c="#888" />
      <P d="M4 37L12 43H44L36 37H4" c={B} />
      <Arrow a={[24, 40, 24, 4]} c={B} s={7} />
    </>
  ),
  s4: (
    <>
      <rect x="6" y="9" width="36" height="30" rx="3" fill={LB} stroke={K} strokeWidth="2" />
      <P d="M15 15H33V33H15ZM15 21H33M15 27H33" c={B} />
    </>
  ),
  s5: (
    <>
      <P d="M3 2V8H7M15 18V22H20M27 32V36H32" />
      <P d="M10 4H15L17 6H22V13H10ZM22 18H27L29 20H34V27H22ZM34 32H39L41 34H46V41H34Z" f={YL} />
    </>
  ),
  scheme: <Scheme />,
  plane: <P d="M6 19H32L42 29H16Z" c={G3} f={G1} />,
  storeysOff: <Storeys c={G3} m={G2} f={G1} />,
  slabOff: <Slab g />,
  slabEdit: (
    <>
      <P d="M6 6V44M14 6V28M14 36V44" c={K} />
      <rect x="5" y="5" width="9" height="39" fill="#7aa3de" />
      <rect x="14" y="29" width="29" height="6" fill="#7aa3de" stroke={K} strokeWidth="2" />
      <path d="M24 22L27 15L38 6L43 10L32 19Z" fill={YL} stroke="#888" />
      <path d="M38 6L43 10L40 12L35 8Z" fill={R2} />
    </>
  ),
  slab: <Slab />,
  measure: (
    <>
      <P d="M6 8H34V44H6Z" f={G1} />
      <P d="M12 17H28M12 23H28M12 29H28M12 35H28" />
      <path d="M26 14L42 1L47 7L31 20Z" fill={YL} stroke="#8a7a4a" strokeWidth="1.5" />
    </>
  ),
  axes: (
    <>
      <Axes x={5} y={42} />
      <Swap />
    </>
  ),
  window: (
    <>
      <rect x="4" y="8" width="39" height="34" fill={G1} stroke={K} strokeWidth="2" />
      <rect x="3" y="7" width="41" height="8" fill={K} />
      <path d="M33 11h2M38 11h2" stroke="#fff" strokeWidth="3" />
      <rect x="21" y="24" width="6" height="15" fill={B} />
      <circle cx="24" cy="20" r="3" fill={B} />
    </>
  ),
  props: (
    <>
      <P d="M8 10H36V44H8Z" f={G1} />
      <P d="M14 18H17M20 18H30M14 24H17M20 24H31M14 30H17M20 30H31M14 36H17M20 36H31" />
      <Badge x={35} y={15} />
    </>
  ),
  sheet: <Sheet />,
  pdf: (
    <>
      <g transform="translate(7 -3) scale(0.72)">
        <Floppy />
      </g>
      <T x={24} y={45} s={11}>PDF|DXF</T>
    </>
  ),
  viewback: (
    <>
      <g transform="translate(1 10) scale(0.76)">
        <Block a={G1} b={G3} c={G1} d={G3} />
      </g>
      <ArrowL x={26} y={3} />
    </>
  ),
  block: <Block a={G1} b={G3} c={G1} d={G3} />,
  doc: (
    <>
      <P d="M10 6H37V42H10Z" f={G1} w={3} />
      <P d="M16 17H31M16 24H31M16 31H31" c={R} w={3} />
    </>
  ),
  plan: <P d="M4 9H43V38H4ZM10 14H20V33H10ZM27 14H37V22H27ZM27 38V29H43" f={G1} />,
  books: <P d="M9 6H20V42H9ZM20 8L30 5L42 39L32 43L20 8M9 13H20M9 35H20M23 14L33 11M30 35L39 32" f={G1} />,
  tiles: (
    <>
      <P d="M20 6L30 20L20 30L10 20Z" f={G1} />
      <P d="M34 19L44 26L38 36L29 28Z" f={G3} />
      <P d="M24 28L32 33L22 45L15 38Z" f={G1} />
    </>
  ),
  sphere: (
    <>
      <C x={24} y={24} r={15} f="#7aa3de" />
      <path d="M10 24C12 12 24 8 30 14C20 12 16 20 18 28C16 32 12 30 10 24Z" fill={LB} />
    </>
  ),
  /* options tree */
  config: (
    <>
      <C x={24} y={24} r={21} f={G1} />
      <P d="M9 19H39M9 29H39M29 10V25M19 24V38" w={4} />
    </>
  ),
  gear: (
    <>
      <P
        d="M21 4H27L29 11L34 13L40 9L44 16L39 21V27L44 32L40 39L34 35L29 37L27 44H21L19 37L14 35L8 39L4 32L9 27V21L4 16L8 9L14 13L19 11Z"
        f={G2}
      />
      <C x={24} y={24} r={8} f="#fff" />
    </>
  ),
  screen: (
    <>
      <P d="M4 10H44V36H4Z" f="#fff" />
      <path d="M20 37H28V41H33V44H15V41H20Z" fill={K} />
    </>
  ),
  tips: (
    <>
      <P d="M34 42H7V8H43V16" />
      <P d="M11 16H31M11 22H26M11 28H31M11 34H24" />
      <Cursor x={33} y={18} s={1.05} />
    </>
  ),
  globe: (
    <>
      <C x={24} y={24} r={20} f={G2} />
      <path d="M6 17Q10 7 19 5L23 9L20 17L13 22L17 28L18 38L14 39Q4 33 6 17Z" fill={K} />
      <path d="M28 5Q42 8 44 24Q42 36 33 42L28 36L31 29L23 26L26 17L34 15L28 11Z" fill={K} />
      <path d="M35 21L40 26L37 31L33 26Z" fill={G2} />
    </>
  ),
  folderOpen: (
    <>
      <P d="M2 37V10H14L18 14H34V21" f={YL} />
      <P d="M3 37L12 22H45L36 37Z" f={Y} />
    </>
  ),
  folder: <P d="M6 37V9H21L23 13H41V37ZM6 13H23" f={Y} />,
};

const sizes: Record<string, string> = {
  ms: "size-8",
  md: "size-9",
  lg: "size-12",
};
function Ico({ n, s = "lg" }: { n: string; s?: "ms" | "md" | "lg" }) {
  return (
    <svg viewBox="0 0 48 48" fill="none" aria-hidden="true" className={`${sizes[s]} shrink-0 overflow-visible`}>
      {icons[n]}
    </svg>
  );
}

/* ---------- shared chrome ---------- */

const dots =
  "[background-image:conic-gradient(from_270deg_at_1px_1px,#555_90deg,transparent_0),conic-gradient(from_270deg_at_1px_1px,#555_90deg,transparent_0)] [background-size:4px_4px] [background-position:0_0,2px_2px]";

const Grip = () => <span className={`h-[58px] w-[5px] shrink-0 ${dots}`} />;
const Sep = ({ className = "mx-[7px]" }: { className?: string }) => <span className={`h-[58px] w-px shrink-0 bg-[#cccddb] ${className}`} />;
const More = ({ label }: { label: string }) => (
  <button aria-label={label} className="flex h-[58px] w-6 shrink-0 items-end justify-center pb-2">
    <svg viewBox="0 0 10 6" className="h-[6px] w-[10px]" aria-hidden="true">
      <path d="M0 0H10L5 6Z" fill="#717171" />
    </svg>
  </button>
);

function Tool({ n, on = false }: { n: string; on?: boolean }) {
  return (
    <button
      aria-label={n}
      aria-pressed={on}
      className={`flex h-[59px] w-[61px] shrink-0 items-center justify-center ${on ? "border border-[#0a9bee]" : ""}`}
    >
      <Ico n={n} />
    </button>
  );
}
const Tools = ({ list }: { list: string[] }) => (
  <>
    {list.map((n) => (
      <Tool key={n} n={n} />
    ))}
  </>
);

function Combo({ label, value, className }: { label: string; value: string; className: string }) {
  return (
    <div className={`relative h-10 shrink-0 border border-[#cccddb] bg-white p-0.5 ${className}`}>
      <select aria-label={label} className="size-full appearance-none bg-[#f6f6f9] pl-0.5 text-[#1e1e1e] outline-none">
        <option>{value}</option>
      </select>
      <span className="pointer-events-none absolute inset-y-0.5 right-0.5 flex w-9 items-center justify-center bg-[#eeeef0]">
        <svg viewBox="0 0 10 6" className="h-[6px] w-[10px]" aria-hidden="true">
          <path d="M0 0H10L5 6Z" fill="#717171" />
        </svg>
      </span>
    </div>
  );
}

function PanelHead({ title }: { title: string }) {
  return (
    <div className="flex h-[41px] items-center">
      <h2>{title}</h2>
      <span className={`mr-1 ml-4 h-[5px] flex-1 ${dots}`} />
      <button aria-label="Optionen" className="flex w-9 justify-center">
        <svg viewBox="0 0 18 10" className="h-2.5 w-[18px]" aria-hidden="true">
          <path d="M0 0H18L9 10Z" fill="#717171" />
        </svg>
      </button>
      <button aria-label="Anheften" className="flex w-9 justify-center">
        <svg viewBox="0 0 14 18" className="h-[18px] w-3.5" aria-hidden="true">
          <path d="M3 11V1H11V11M0 11H14M7 11V18M10 1V11" fill="none" stroke="#717171" strokeWidth="2" />
        </svg>
      </button>
      <button aria-label="Schliessen" className="flex w-9 justify-center">
        <svg viewBox="0 0 16 16" className="size-4" aria-hidden="true">
          <path d="M1 1L15 15M15 1L1 15" stroke="#717171" strokeWidth="3" />
        </svg>
      </button>
    </div>
  );
}

/* ---------- top bars ---------- */

const menu = ["Datei", "Bearbeiten", "Ansicht", "Einfügen", "Zeichnen", "AR-Objekte", "Ändern", "Ausfertigen", "Information", "Extras", "Einstellungen", "Fenster", "Tastenkombinationen", "?"];

function TitleBar() {
  return (
    <div className="flex h-[46px] items-center border-b border-[#cccddb] pr-6 pl-2.5">
      <svg viewBox="0 0 30 32" className="h-8 w-[30px]" aria-hidden="true">
        <rect x="1" y="3" width="26" height="27" fill="#e8e8ea" stroke="#222" strokeWidth="2" />
        <circle cx="24" cy="6" r="6" fill={PK} />
        <path d="M20 4l4-2 4 2M20 8l4 2 4-2" stroke={R} fill="none" />
        <text x="14" y="24" fontSize="20" textAnchor="middle" fill="#222" fontFamily='"Open Sans", sans-serif'>A</text>
      </svg>
      <svg viewBox="0 0 32 32" className="ml-10 size-8" aria-hidden="true">
        <rect width="32" height="32" fill="#dcdcdc" />
        <path d="M16 3L26 8V24L16 30L6 24V8ZM6 8L16 14L26 8M6 15L16 21L26 15M6 21L16 27L26 21" fill="none" stroke="#c83a32" strokeWidth="2" />
      </svg>
      <h1 className="ml-7 flex-1 text-[23px] whitespace-pre text-[#a0a0a2]">
        {"Proj:<CAD_Objekt1> Bauk:<EFH>  Gesch:<EG>  Datei:<unbenannt.d> ELITECAD - [Modell]"}
      </h1>
      <label className="mb-1 flex h-9 w-[440px] items-center border border-[#cccddb] bg-white">
        <svg viewBox="0 0 32 32" className="size-8" aria-hidden="true">
          <circle cx="20" cy="12" r="9" fill="none" stroke="#717171" strokeWidth="3" />
          <path d="M14 19L4 30" stroke="#717171" strokeWidth="4" />
        </svg>
        <input aria-label="Was möchtest du tun?" placeholder="Was möchtest du tun?" className="ml-2 min-w-0 flex-1 outline-none placeholder:text-[#717171]" />
      </label>
      <button aria-label="Hinweise" className="ml-6">
        <svg viewBox="0 0 52 40" className="h-10 w-[52px]" aria-hidden="true">
          <circle cx="17" cy="18" r="13" fill={G1} stroke={K} strokeWidth="2" />
          <path d="M17 16V27M17 9V13" stroke={B} strokeWidth="4" />
          <circle cx="40" cy="28" r="10" fill="#9b55d0" />
          <text x="40" y="34" fontSize="16" textAnchor="middle" fill="#fff" fontFamily='"Open Sans", sans-serif'>1</text>
        </svg>
      </button>
      <button aria-label="Minimieren" className="ml-[34px] flex h-8 w-4 items-center">
        <span className="mt-2.5 h-1 w-3.5 bg-[#c0c0c2]" />
      </button>
      <button aria-label="Wiederherstellen" className="ml-14">
        <svg viewBox="0 0 18 18" className="size-[18px]" aria-hidden="true">
          <path d="M5 5V1H16V10H12M1 7H12V17H1Z" fill="none" stroke="#c0c0c2" strokeWidth="3" />
        </svg>
      </button>
      <button aria-label="Beenden" className="mr-1 ml-14">
        <svg viewBox="0 0 16 16" className="size-4" aria-hidden="true">
          <path d="M1 1L15 15M15 1L1 15" stroke="#c0c0c2" strokeWidth="3" />
        </svg>
      </button>
    </div>
  );
}

function TopBars() {
  return (
    <header className="flex h-[235px] shrink-0 flex-col">
      <TitleBar />
      <div className="flex h-[62px] items-center pb-0.5 pl-1">
        <Grip />
        <nav className="ml-3.5 flex gap-[29px]">
          {menu.map((m) => (
            <button key={m}>{m}</button>
          ))}
        </nav>
      </div>
      <div className="flex h-[62px] items-center pl-1">
        <Grip />
        <Tools list={["new", "open", "save", "print", "preview", "recent", "autosave"]} />
        <Sep />
        <Tools list={["cut", "copy", "paste"]} />
        <Sep className="mx-2" />
        <Tools list={["undo", "redo"]} />
        <More label="Mehr Standard" />
        <Grip />
        <span className="w-1 shrink-0" />
        <Tools list={["plus", "minus"]} />
        <Sep className="mx-2" />
        <Tools list={["move", "dup", "rotate", "mirror", "scale", "modify"]} />
        <Sep />
        <Tools list={["stretch", "trim", "extend", "multi", "eraser", "redline"]} />
        <More label="Mehr Bearbeiten" />
        <Grip />
        <span className="w-1.5 shrink-0" />
        <Tools list={["box0", "box1", "box2", "box3", "box4", "box5", "pyramid", "prevbox", "nextbox", "prevcam", "nextcam"]} />
        <More label="Mehr Ansichten" />
        <Grip />
        <span className="w-1 shrink-0" />
        <Tools list={["level", "height", "brush", "house", "column", "fillet", "three", "lamp", "camera"]} />
        <More label="Mehr Objekte" />
      </div>
      <div className="flex h-[65px] items-center pl-1">
        <Grip />
        <Tool n="cancel" />
        <Tool n="select" on />
        <Tools list={["layers", "rect", "nodes", "pick"]} />
        <More label="Mehr Auswahl" />
        <Grip />
        <span className="w-[2116px] shrink" />
        <Grip />
        <span className="ml-2.5 flex">
          <Ico n="layers" />
        </span>
        <Combo label="Layer" value="Wand" className="ml-2.5 w-[307px]" />
        <span className="w-[45px]" />
        <Grip />
      </div>
    </header>
  );
}

/* ---------- tool palette ---------- */

const range = (p: string, n: number) => Array.from({ length: n }, (_, i) => p + (i + 1));
const groups: { title: string; items?: string[] }[] = [
  { title: "Hilfslinien", items: range("h", 9) },
  { title: "Elemente", items: range("e", 16) },
  { title: "Bauteile", items: range("b", 20) },
  { title: "Erweiterte Wandfunktionen" },
  { title: "Erweiterte Dachfunktionen" },
  { title: "Ausfertigung", items: range("a", 15) },
  { title: "Freiformen", items: range("f", 14) },
  { title: "Gelände" },
  { title: "Umbauplanung" },
  { title: "Kamera" },
  { title: "Auswertung" },
  { title: "BIM Werkzeuge" },
  { title: "3D Plattformen" },
];

function Palette() {
  return (
    <aside className="flex w-[352px] shrink-0 flex-col border-r-2 border-[#cccddb]">
      <div className="pl-[5px]">
        <PanelHead title="Werkzeuge" />
      </div>
      <div className="flex flex-1 flex-col border-x border-b border-[#cccddb] bg-[#f6f6f9]">
        <label className="flex h-[54px] items-center border-y-2 border-[#cccddb] pr-1.5 pl-3">
          <input aria-label="Suchen" placeholder="Suchen" className="min-w-0 flex-1 bg-transparent outline-none placeholder:text-[#717171]" />
          <svg viewBox="0 0 32 32" className="size-8" aria-hidden="true">
            <circle cx="19" cy="12" r="10" fill="none" stroke="#0f86e0" strokeWidth="2" />
            <path d="M12 19L3 28" stroke="#0f86e0" strokeWidth="4" strokeLinecap="round" />
          </svg>
        </label>
        {groups.map((g) => (
          <section key={g.title}>
            <button aria-expanded={!!g.items} className="flex h-9 w-full items-center gap-2 pl-2 font-bold">
              <svg viewBox="0 0 14 14" className="size-3.5" aria-hidden="true">
                {g.items ? <path d="M14 0V14H0Z" fill="#a6a6a8" /> : <path d="M2 0L11 7L2 14Z" fill="none" stroke="#b0b0b0" />}
              </svg>
              {g.title}
            </button>
            {g.items && (
              <div className="grid grid-cols-[repeat(5,60px)] pt-[7px] pb-[13px] pl-2">
                {g.items.map((n) => (
                  <button key={n} aria-label={`${g.title} ${n}`} className="flex h-[60px] items-center justify-center">
                    <Ico n={n} />
                  </button>
                ))}
              </div>
            )}
          </section>
        ))}
      </div>
    </aside>
  );
}

/* ---------- drawing area ---------- */

function ViewTool({ n, on }: { n: string; on: boolean }) {
  return (
    <button aria-label={n} aria-pressed={on} className={`flex h-[53px] w-[53px] shrink-0 items-center justify-center ${on ? "border border-[#0a7ccc]" : ""}`}>
      <Ico n={n} />
    </button>
  );
}

function Workspace() {
  return (
    <main className="flex min-w-0 flex-1 flex-col">
      <div className="relative flex flex-1 overflow-hidden bg-white px-[274px]">
        <div className="flex-1 border-x border-t border-black" />
        <svg viewBox="0 0 64 64" className="absolute top-[458px] left-[870px] size-16" aria-hidden="true">
          <path d="M32 0V64M0 32H64" stroke="#000" shapeRendering="crispEdges" />
        </svg>
      </div>
      <div className="flex h-10 items-start justify-between border-t border-[#cccddb]">
        <div className="relative flex h-9 w-56 items-center pl-[53px]">
          <svg viewBox="0 0 224 36" className="absolute inset-0 h-9 w-56" aria-hidden="true">
            <path d="M1 0L36 35H221L223 33V0" fill="#f0f0f0" stroke="#a0a0a0" />
          </svg>
          <span className="relative flex w-full items-center">
            <Ico n="block" s="ms" />
            <button className="ml-[18px] font-bold text-black">Modell</button>
            <button aria-label="Modell schliessen" className="ml-5">
              <svg viewBox="0 0 16 16" className="size-4" aria-hidden="true">
                <path d="M1 1L15 15M15 1L1 15" stroke="#717171" strokeWidth="3" />
              </svg>
            </button>
          </span>
        </div>
        <button aria-label="Ansichten wählen" className="mt-3.5 mr-[5px]">
          <svg viewBox="0 0 18 10" className="h-2.5 w-[18px]" aria-hidden="true">
            <path d="M0 0H18L9 10Z" fill="#717171" />
          </svg>
        </button>
      </div>
      <div className="flex h-[75px] items-center gap-0.5 border-t-2 border-[#cccddb] pr-2 pb-0.5 pl-2.5">
        {range("v", 17).map((n) => (
          <ViewTool key={n} n={n} on={n === "v17"} />
        ))}
        {range("w", 16).map((n, i) => (
          <ViewTool key={n} n={n} on={i > 11} />
        ))}
        <span className="flex-1" />
        <Ico n="section" />
        <Combo label="Planungsphase" value="Entwurfsplanung" className="ml-3 w-[383px]" />
        <Combo label="Einschränkung" value="Keine Einschränkung" className="ml-1.5 w-[383px]" />
      </div>
      <div className="flex h-[54px] items-start gap-2 pr-2 pl-2">
        <input aria-label="Eingabezeile" className="h-[41px] min-w-0 flex-1 border border-t-white border-r-white border-b-[#808080] border-l-white bg-[#f0f0f0] px-2 outline-none" />
        <Combo label="Massstab" value="1:100" className="mt-0.5 ml-0.5 w-[332px]" />
        <Combo label="Einheit" value="cm" className="mt-0.5 w-[248px]" />
        <Combo label="Papierformat" value="A3" className="mt-0.5 w-[248px]" />
      </div>
    </main>
  );
}

/* ---------- right docks ---------- */

function IconBtn({ n, className = "w-[66px]" }: { n: string; className?: string }) {
  return (
    <button aria-label={n} className={`flex justify-center ${className}`}>
      <Ico n={n} />
    </button>
  );
}

const views = ["Modellansichten", "Ansichten", "Schnitte", "Grundrisse", "Details", "Plots", "Layoutvorlagen", "Referenz"];

function Docks() {
  return (
    <aside className="flex w-[442px] shrink-0 flex-col border-l-2 border-[#cccddb]">
      <div className="pl-2.5">
        <PanelHead title="Geschoss" />
      </div>
      <div className="flex h-[67px] items-center">
        <IconBtn n="s1" className="w-[62px]" />
        <IconBtn n="s2" className="w-[68px]" />
        <IconBtn n="s3" className="w-16" />
        <span className="h-9 w-px bg-white" />
        <IconBtn n="s4" className="w-[68px]" />
        <IconBtn n="s5" className="w-[66px]" />
        <span className="h-9 w-px bg-white" />
        <IconBtn n="scheme" className="w-[70px]" />
      </div>
      <div className="flex h-[484px] bg-white">
        <table className="h-full border-collapse">
          <thead>
            <tr className="h-[50px] border-b border-[#cccddb] bg-[#f0f0f0]">
              <th aria-label="Ebene" className="w-[66px] border-r border-[#c8c8c8] p-0">
                <div className="flex justify-center pt-3"><Ico n="plane" s="md" /></div>
              </th>
              <th aria-label="Geschoss" className="w-[66px] border-r border-[#c8c8c8] p-0">
                <div className="flex justify-center"><Ico n="storeysOff" s="ms" /></div>
              </th>
            </tr>
          </thead>
          <tbody className="text-center text-black">
            {[["", "plane"], ["1", "slabOff"], ["0", "slabEdit"]].map(([label, icon]) => (
              <tr key={icon} className="h-10">
                <td className="border-r border-[#c8c8c8] p-0 pr-1.5">{label}</td>
                <td className="border-r border-[#c8c8c8] p-0">
                  <div className={`flex h-10 justify-center ${icon === "plane" ? "items-end" : "items-center"}`}><Ico n={icon} s="ms" /></div>
                </td>
              </tr>
            ))}
            <tr>
              <td className="h-full border-r border-[#c8c8c8]" />
              <td className="h-full border-r border-[#c8c8c8]" />
            </tr>
          </tbody>
        </table>
      </div>
      <div className="flex h-[54px] border-t border-[#cccddb]">
        <button className="flex w-[144px] items-center justify-between border-r border-b border-[#cccddb] bg-[#f6f6f9] pr-3 pl-1.5 text-[#0e639c]">
          <Ico n="slab" />
          Gesc...
        </button>
        <button className="flex w-[146px] items-center justify-between pr-4 pl-2">
          <Ico n="measure" />
          Mess...
        </button>
        <button className="flex flex-1 items-center justify-between pr-3 pl-2">
          <Ico n="axes" />
          Arbeit...
        </button>
      </div>
      <div className="border-t-[3px] border-[#cccddb] pl-2.5">
        <PanelHead title="Ansicht" />
      </div>
      <div className="flex h-[68px] items-center pl-0.5">
        <IconBtn n="sheet" className="w-14" />
        <button aria-label="Neue Ansicht Optionen" className="flex w-10 justify-center">
          <svg viewBox="0 0 10 5" className="h-[5px] w-2.5" aria-hidden="true">
            <path d="M0 0H10L5 5Z" fill="#000" />
          </svg>
        </button>
        <button className="w-[58px] text-[32px] leading-none font-bold text-[#4d4d4d]">3D</button>
        <IconBtn n="pdf" className="w-[68px]" />
        <IconBtn n="scheme" className="w-16" />
        <IconBtn n="viewback" className="w-16" />
      </div>
      <ul className="font-bold">
        <li className="flex h-9 items-center pl-2 text-[#1f60c4]">
          <svg viewBox="0 0 16 16" className="mr-2 size-4" aria-hidden="true">
            <path d="M1 4L8 11L15 4" fill="none" stroke="#1e1e1e" strokeWidth="3" />
          </svg>
          <Ico n="block" s="ms" />
          <span className="ml-0.5 flex"><Ico n="doc" s="ms" /></span>
          <span className="ml-2">Modell</span>
        </li>
        {views.map((v, i) => (
          <li key={v} className="flex h-9 items-center pl-2">
            <span className="flex w-8 shrink-0">
              {i === 0 && (
                <svg viewBox="0 0 16 16" className="size-4" aria-hidden="true">
                  <path d="M4 1L11 8L4 15" fill="none" stroke="#8a8a8a" strokeWidth="3" />
                </svg>
              )}
            </span>
            {v}
          </li>
        ))}
      </ul>
      <div className="flex-1 bg-white" />
      <div className="flex h-[55px] border-t border-[#cccddb]">
        {["plan", "layers", "books", "tiles", "sphere"].map((n, i) => (
          <button
            key={n}
            aria-label={`Register ${n}`}
            className={`flex w-[87px] items-center justify-between pr-1.5 pl-2 ${i === 0 ? "border-r border-b border-[#cccddb] bg-[#f6f6f9] text-[#0e639c]" : ""}`}
          >
            <Ico n={n} />
            ...
          </button>
        ))}
      </div>
    </aside>
  );
}

function SideTabs() {
  return (
    <aside className="flex w-[70px] shrink-0 flex-col gap-4 pt-[7px]">
      {[["window", "Infofenster"], ["props", "Eigenschaften"]].map(([n, label]) => (
        <button key={n} className="flex flex-col items-center gap-1 border-r-[6px] border-[#cccddb] pr-1">
          <Ico n={n} />
          <span className="[writing-mode:vertical-rl]">{label}</span>
        </button>
      ))}
    </aside>
  );
}

/* ---------- options dialog ---------- */

function Check({ label, on = false }: { label: string; on?: boolean }) {
  return (
    <label className="flex items-center gap-1.5">
      <span className="relative flex size-[26px]">
        <input
          type="checkbox"
          defaultChecked={on}
          className="peer size-[26px] appearance-none rounded-[5px] border-2 border-[#707070] bg-[#f6f6f6] checked:border-[#005fb8] checked:bg-[#005fb8]"
        />
        <svg viewBox="0 0 26 26" className="pointer-events-none absolute inset-0 hidden size-[26px] peer-checked:block" aria-hidden="true">
          <path d="M7 13L11 17L19 9" fill="none" stroke="#fff" strokeWidth="2" />
        </svg>
      </span>
      {label}
    </label>
  );
}

function Drop({ id, value, className }: { id: string; value: string; className: string }) {
  return (
    <div className={`relative h-10 ${className}`}>
      <select id={id} className="size-full appearance-none rounded-[3px] border border-[#cfcfcf] bg-[#fdfdfd] pl-[3px] text-black outline-none">
        <option>{value}</option>
      </select>
      <svg viewBox="0 0 12 8" className="pointer-events-none absolute top-4 right-2.5 h-2 w-3" aria-hidden="true">
        <path d="M1 1L6 6L11 1" fill="none" stroke="#555" strokeWidth="1.5" />
      </svg>
    </div>
  );
}

const treeKids = [
  ["config", "Konfiguration"],
  ["gear", "Allgemein"],
  ["screen", "Oberfläche"],
  ["tips", "Tooltips"],
  ["globe", "Region"],
];

function Toggle({ open, label }: { open: boolean; label: string }) {
  return (
    <button aria-label={label} aria-expanded={open} className="relative z-10 size-[19px] border border-[#919191] bg-[#f8f8f8]">
      <svg viewBox="0 0 17 17" className="size-[17px]" aria-hidden="true">
        <path d={open ? "M3 8.500H14" : "M3 8.500H14M8.500 3V14"} stroke="#3c55a5" strokeWidth="2" />
      </svg>
    </button>
  );
}

function OptionTree() {
  return (
    <ul className="relative w-[439px] shrink-0 border-t border-r border-b border-[#828790] bg-white pt-px">
      <span className="absolute top-6 left-[28px] h-[433px] border-l border-dotted border-[#808080]" />
      <li>
        <div className="flex h-12 items-center pl-[19px]">
          <Toggle open label="System" />
          <span className="w-4 border-t border-dotted border-[#808080]" />
          <span className="ml-0.5 flex"><Ico n="folderOpen" /></span>
          <span className="ml-1">System</span>
        </div>
        <ul className="relative">
          <span className="absolute top-0 left-[80px] h-[216px] border-l border-dotted border-[#808080]" />
          {treeKids.map(([n, label]) => (
            <li key={label} className="flex h-12 items-center pl-[80px]">
              <span className="w-[26px] border-t border-dotted border-[#808080]" />
              <Ico n={n} />
              <a
                href="#"
                aria-current={n === "screen" ? "page" : undefined}
                className={`ml-[3px] flex h-12 items-center px-0.5 ${n === "screen" ? "bg-[#0078d7] text-white" : ""}`}
              >
                {label}
              </a>
            </li>
          ))}
        </ul>
      </li>
      {["Speichern/Laden", "Arbeitsparameter", "Darstellung", "Ansichten"].map((label) => (
        <li key={label} className="flex h-12 items-center pl-[19px]">
          <Toggle open={false} label={label} />
          <span className="w-4 border-t border-dotted border-[#808080]" />
          <span className="ml-0.5 flex"><Ico n="folder" /></span>
          <span className="ml-1">{label}</span>
        </li>
      ))}
    </ul>
  );
}

function OptionsDialog() {
  return (
    <div className="pointer-events-none fixed inset-0 flex items-center justify-center pb-[13px] text-[23px] text-black">
      <div
        role="dialog"
        aria-label="Optionen - System - Oberfläche"
        className="pointer-events-auto flex h-[824px] w-[1274px] flex-col overflow-hidden rounded-2xl border-2 border-[#005a9e] bg-[#f0f0f0] shadow-[0_44px_80px_rgba(0,0,0,0.3),0_4px_40px_rgba(0,0,0,0.14)]"
      >
        <div className="flex h-[57px] shrink-0 items-center justify-between bg-white pr-[22px] pl-3">
          <h2>Optionen - System - Oberfläche</h2>
          <button aria-label="Dialog schliessen">
            <svg viewBox="0 0 22 22" className="size-[22px]" aria-hidden="true">
              <path d="M1 1L21 21M21 1L1 21" stroke="#000" strokeWidth="2" />
            </svg>
          </button>
        </div>
        <div className="flex min-h-0 flex-1 pb-1">
          <OptionTree />
          <div className="flex min-w-0 flex-1 flex-col justify-between pt-3">
            <fieldset className="mr-[27px] ml-[30px] h-[498px] min-w-0 border border-[#dcdcdc] px-[34px]">
              <legend className="-ml-[28px] px-0.5 leading-8">Oberfläche allgemein</legend>
              <div className="-mt-0.5 -mr-7 flex items-center justify-between">
                <label htmlFor="layout" className="pt-2">Ansichtslayout</label>
                <Drop id="layout" value="Ansichten im Registerkartenformat" className="w-[416px]" />
              </div>
              <div className="mt-6 grid grid-cols-[482px_100px] items-center">
                <label htmlFor="max">Maximal geöffnete Ansichten</label>
                <input id="max" defaultValue="16" className="h-[52px] w-full border border-[#e4e4e4] border-b-[#868686] bg-white px-2 pb-2.5 outline-none" />
              </div>
              <div className="mt-3 flex flex-col gap-3.5">
                <Check label="Neue Ansichten immer in neuem Fenster öffnen" />
                <Check label="Register nach Ansichtstyp einfärben" on />
              </div>
              <div className="mt-[18px] grid grid-cols-[316px_267px] items-center">
                <label htmlFor="design" className="pt-2 pl-1">Oberflächen-Design</label>
                <Drop id="design" value="Technisch - Hell" className="w-full" />
              </div>
              <div className="mt-3 pl-[316px]">
                <Check label="Auch in Dialogen" />
              </div>
              <div className="mt-2.5 flex flex-col gap-3.5">
                <Check label="Bildlaufleiste für Grafikfenster verwenden" />
                <Check label="Benachrichtigungen als Infoblase anzeigen" on />
                <Check label="Welcomescreen beim Start anzeigen" on />
              </div>
            </fieldset>
            <div className="mr-[30px] mb-2 ml-[9px] flex items-center gap-2">
              <Check label="Erweitert" on />
              <span className="flex-1" />
              {["OK", "Abbrechen", "Hilfe"].map((b) => (
                <button key={b} className="h-[54px] w-[161px] rounded-[3px] border border-[#d0d0d0] bg-[#fdfdfd]">
                  {b}
                </button>
              ))}
            </div>
          </div>
        </div>
      </div>
    </div>
  );
}

export default function App() {
  return (
    <div className="flex h-screen flex-col bg-[#eeeef0] font-['Open_Sans',sans-serif] text-[22px] leading-[34px] text-[#1e1e1e]">
      <TopBars />
      <div className="flex min-h-0 flex-1">
        <div className="flex min-w-0 flex-1 flex-col">
          <div className="flex min-h-0 flex-1">
            <Palette />
            <Workspace />
            <Docks />
          </div>
          <footer className="mb-0.5 flex h-[37px] shrink-0 items-center bg-[#007acc] pl-[5px] text-white">
            <span className="flex-1">Bereit</span>
            <span>Z-12</span>
            <span className="ml-[60px]">GPU 8,1GB frei</span>
            <span className="ml-[18px]">NUM</span>
            <span className="ml-1.5 text-[#7ab8e6]">UF</span>
          </footer>
        </div>
        <SideTabs />
      </div>
      <OptionsDialog />
    </div>
  );
}
